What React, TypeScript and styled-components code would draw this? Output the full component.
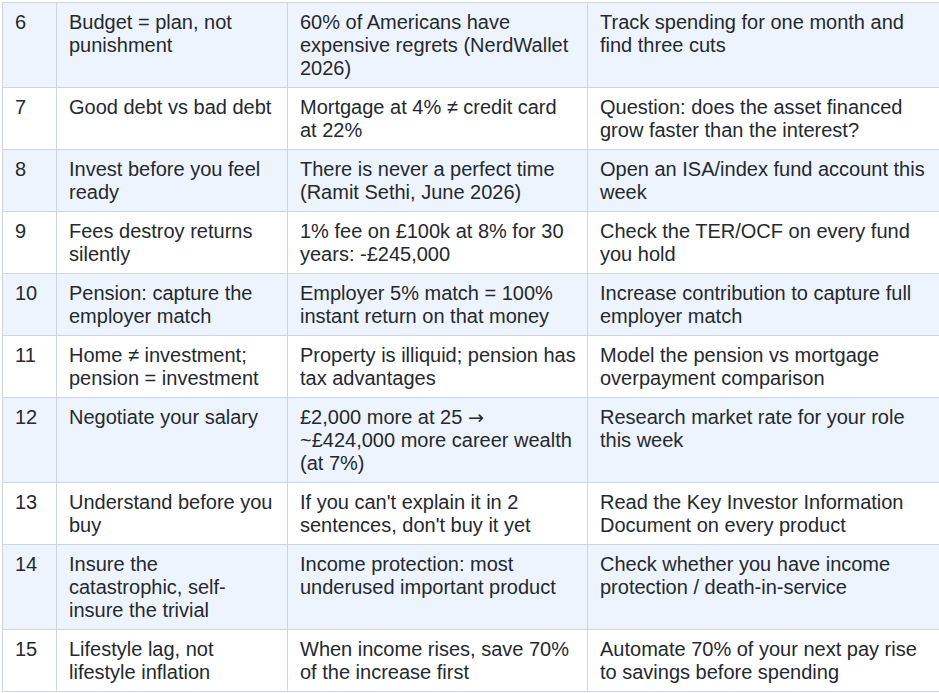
import React from "react";
import styled, { createGlobalStyle } from "styled-components";

const GlobalStyle = createGlobalStyle`
  html, body {
    margin: 0;
    padding: 0;
    background: #ffffff;
  }
  body {
    font-family: "Liberation Sans", Arial, sans-serif;
    color: #24292f;
  }
`;

const Wrapper = styled.div`
  padding: 2px 0 0 2px;
`;

const Table = styled.table`
  border-collapse: collapse;
  table-layout: fixed;
  width: 937px;
  font-size: 20px;
  line-height: 23px;
`;

const Col = styled.col<{ $w: number }>`
  width: ${(p) => p.$w}px;
`;

const Row = styled.tr<{ $striped: boolean }>`
  background: ${(p) => (p.$striped ? "#eef4fd" : "#ffffff")};
`;

const Cell = styled.td`
  border: 1px solid #cfd5df;
  padding: 8px 11px 7px 12px;
  vertical-align: top;
  text-align: left;
  color: #24292f;
`;

const Arrow = styled.span`
  font-family: "DejaVu Sans", sans-serif;
  font-size: 19px;
`;

const columns = [54, 231, 300, 352];

type Content = React.ReactNode;

const rows: [string, Content, Content, Content][] = [
  ["6", "Budget = plan, not punishment", "60% of Americans have expensive regrets (NerdWallet 2026)", "Track spending for one month and find three cuts"],
  ["7", "Good debt vs bad debt", "Mortgage at 4% \u2260 credit card at 22%", "Question: does the asset financed grow faster than the interest?"],
  ["8", "Invest before you feel ready", "There is never a perfect time (Ramit Sethi, June 2026)", "Open an ISA/index fund account this week"],
  ["9", "Fees destroy returns silently", "1% fee on \u00a3100k at 8% for 30 years: -\u00a3245,000", "Check the TER/OCF on every fund you hold"],
  ["10", "Pension: capture the employer match", "Employer 5% match = 100% instant return on that money", "Increase contribution to capture full employer match"],
  ["11", "Home \u2260 investment; pension = investment", "Property is illiquid; pension has tax advantages", "Model the pension vs mortgage overpayment comparison"],
  [
    "12",
    "Negotiate your salary",
    <>
      {"\u00a32,000 more at 25 "}
      <Arrow>{"\u2192"}</Arrow>
      {" ~\u00a3424,000 more career wealth (at 7%)"}
    </>,
    "Research market rate for your role this week",
  ],
  ["13", "Understand before you buy", "If you can't explain it in 2 sentences, don't buy it yet", "Read the Key Investor Information Document on every product"],
  ["14", "Insure the catastrophic, self-insure the trivial", "Income protection: most underused important product", "Check whether you have income protection / death-in-service"],
  ["15", "Lifestyle lag, not lifestyle inflation", "When income rises, save 70% of the increase first", "Automate 70% of your next pay rise to savings before spending"],
];

export default function App() {
  return (
    <>
      <GlobalStyle />
      <Wrapper>
        <Table>
          <colgroup>
            {columns.map((w, i) => (
              <Col key={i} $w={w} />
            ))}
          </colgroup>
          <tbody>
            {rows.map((r) => (
              <Row key={r[0]} $striped={Number(r[0]) % 2 === 0}>
                {r.map((c, i) => (
                  <Cell key={i}>{c}</Cell>
                ))}
              </Row>
            ))}
          </tbody>
        </Table>
      </Wrapper>
    </>
  );
}
